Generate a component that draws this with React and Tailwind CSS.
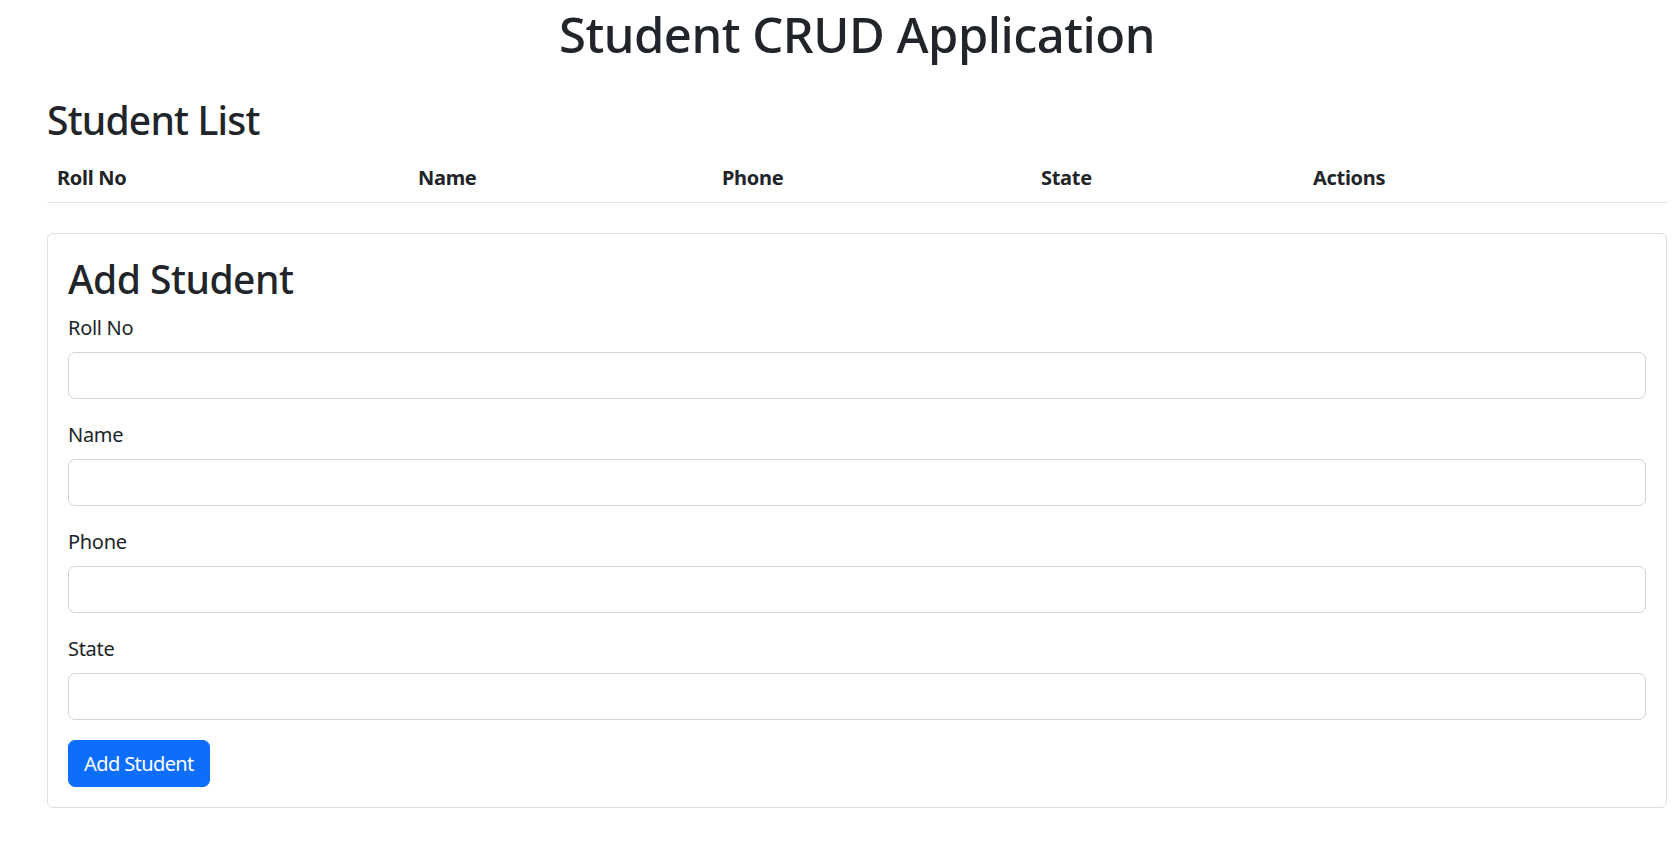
import React from "react";

const cols = [
  { label: "Roll No", w: "w-[361px]" },
  { label: "Name", w: "w-[304px]" },
  { label: "Phone", w: "w-[319px]" },
  { label: "State", w: "w-[272px]" },
  { label: "Actions", w: "w-[363px]" },
];

const fields = ["Roll No", "Name", "Phone", "State"];

export default function App() {
  return (
    <div className="min-h-[852px] w-[1680px] bg-white font-['Noto_Sans',sans-serif] text-[#212529]">
      <div className="ml-[47px] mr-[13px] pt-[4px]">
        <h1 className="text-center text-[49px] font-medium leading-[60px] tracking-[-0.5px]">
          Student CRUD Application
        </h1>
        <h2 className="mt-[32px] text-[39px] font-medium leading-[48px] tracking-[-0.8px]">Student List</h2>
        <div className="mt-[8px] flex border-b border-[#dee2e6]">
          {cols.map((c) => (
            <div
              key={c.label}
              className={`${c.w} px-[10px] pb-[10px] pt-[11px] text-[20px] font-bold leading-[29px] tracking-[-0.3px]`}
            >
              {c.label}
            </div>
          ))}
        </div>
        <div className="mt-[30px] rounded-[6px] border border-[#dfdfdf] p-[20px]">
          <h2 className="mb-[9px] pt-[1px] text-[39px] font-medium leading-[48px] tracking-[-0.5px]">Add Student</h2>
          {fields.map((f) => (
            <div key={f} className="mb-[20px] flex flex-col">
              <label className="mb-[10px] pt-[1px] text-[20px] leading-[29px] tracking-[-0.3px]">{f}</label>
              <input
                type="text"
                className="h-[47px] w-full rounded-[7px] border border-[#ced4da] bg-white px-[15px] text-[20px] outline-none"
              />
            </div>
          ))}
          <button className="h-[47px] rounded-[7px] border border-[#0d6efd] bg-[#0d6efd] px-[15px] text-[20px] leading-[30px] tracking-[-0.6px] text-white">
            Add Student
          </button>
        </div>
      </div>
    </div>
  );
}
